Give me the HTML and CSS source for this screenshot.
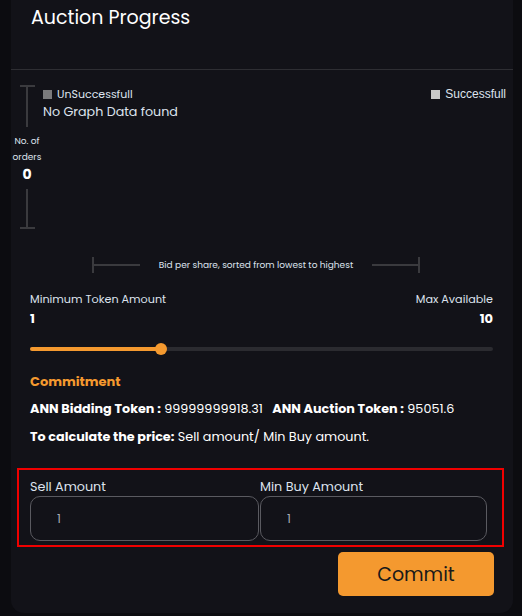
FILE: index.html
```html
<!DOCTYPE html>
<html>
<head>
<meta charset="utf-8">
<link rel="stylesheet" href="styles.css">
</head>
<body>
<div class="card">
  <header class="head">
    <h2 class="title">Auction Progress</h2>
  </header>
  <section class="chart">
    <div class="yaxis">
      <span class="cap"></span>
      <span class="vline"></span>
      <span class="ylabel">No. of<br>orders</span>
      <span class="ycount">0</span>
      <span class="vline v2"></span>
      <span class="cap"></span>
    </div>
    <div class="plot">
      <div class="legend">
        <div class="leg"><span class="sq dark"></span><span>UnSuccessfull</span></div>
        <div class="leg right"><span class="sq light"></span><span>Successfull</span></div>
      </div>
      <p class="nodata">No Graph Data found</p>
    </div>
  </section>
  <div class="xaxis">
    <span class="hcap"></span>
    <span class="hline"></span>
    <span class="xlabel">Bid per share, sorted from lowest to highest</span>
    <span class="hline"></span>
    <span class="hcap"></span>
  </div>
  <section class="range">
    <div class="range-row">
      <span>Minimum Token Amount</span>
      <span>Max Available</span>
    </div>
    <div class="range-row vals">
      <span>1</span>
      <span>10</span>
    </div>
    <div class="slider">
      <div class="fill" style="width: 28.3%"></div>
      <div class="thumb"></div>
    </div>
  </section>
  <section class="commit">
    <h3 class="ctitle">Commitment</h3>
    <p class="line"><b>ANN Bidding Token :</b> 99999999918.31 <b class="sep">ANN Auction Token :</b> 95051.6</p>
    <p class="line"><b>To calculate the price:</b> Sell amount/ Min Buy amount.</p>
  </section>
  <div class="boxed">
    <div class="field f1">
      <label>Sell Amount</label>
      <div class="input">1</div>
    </div>
    <div class="field f2">
      <label>Min Buy Amount</label>
      <div class="input">1</div>
    </div>
  </div>
  <div class="actions">
    <button class="btn">Commit</button>
  </div>
</div>
</body>
</html>
```
FILE: styles.css
```css
* { box-sizing: border-box; }
html, body { margin: 0; padding: 0; }
body {
  background: #0c0c10;
  font-family: "Poppins", "Open Sans", "Noto Sans", sans-serif;
  color: #ffffff;
  width: 522px;
  height: 616px;
  overflow: hidden;
}
.card {
  margin-left: 11px;
  width: 502px;
  height: 613px;
  background: #121218;
  border-radius: 0 0 13px 13px;
}
.head {
  height: 70px;
  border-bottom: 1px solid #2e2e33;
  padding: 4px 0 0 20px;
}
.title {
  margin: 0;
  font-size: 19px;
  font-weight: 400;
  line-height: 28px;
}
.chart {
  display: flex;
  height: 174px;
}
.yaxis {
  width: 32px;
  display: flex;
  flex-direction: column;
  align-items: center;
  padding-top: 15px;
}
.cap {
  display: block;
  width: 15px;
  height: 2px;
  background: #3a3a3e;
}
.vline {
  display: block;
  width: 2px;
  height: 40px;
  background: #3a3a3e;
}
.vline.v2 { height: 38px; }
.ylabel {
  font-size: 9px;
  line-height: 16px;
  color: #dde3ee;
  text-align: center;
  margin-top: 6px;
}
.ycount {
  font-size: 14px;
  font-weight: 700;
  line-height: 18px;
  margin-bottom: 6px;
}
.plot {
  flex: 1;
  padding: 17px 7px 0 0;
}
.legend {
  display: flex;
  justify-content: space-between;
}
.leg {
  display: flex;
  align-items: center;
  gap: 5px;
  font-size: 11px;
  line-height: 14px;
  color: #dde3ee;
}
.leg.right { font-family: "Liberation Sans", Arial, sans-serif; font-size: 12px; }
.sq {
  display: block;
  width: 9px;
  height: 9px;
}
.sq.dark { background: #7a7a7c; }
.sq.light { background: #c8c8c8; }
.nodata {
  margin: 2px 0 0;
  font-size: 12.7px;
  line-height: 18px;
  color: #dde3ee;
}
.xaxis {
  display: flex;
  align-items: center;
  margin: 13px 0 0 81px;
  width: 328px;
  height: 16px;
}
.hcap {
  display: block;
  width: 2px;
  height: 16px;
  background: #3a3a3e;
}
.hline {
  display: block;
  width: 46px;
  height: 2px;
  background: #3a3a3e;
}
.xlabel {
  flex: 1;
  text-align: center;
  font-size: 9px;
  color: #dde3ee;
  white-space: nowrap;
}
.range {
  padding: 18px 20px 0 19px;
}
.range-row {
  display: flex;
  justify-content: space-between;
  font-size: 11.2px;
  line-height: 16px;
  color: #dde3ee;
}
.range-row.vals {
  margin-top: 2px;
  font-size: 13px;
  font-weight: 700;
  color: #ffffff;
  line-height: 20px;
}
.slider {
  position: relative;
  margin-top: 18px;
  height: 4px;
  border-radius: 2px;
  background: #2b2b30;
}
.fill {
  height: 4px;
  border-radius: 2px;
  background: #f4992f;
}
.thumb {
  position: absolute;
  left: calc(28.3% - 6px);
  top: -4px;
  width: 12px;
  height: 12px;
  border-radius: 50%;
  background: #f4992f;
}
.commit {
  padding: 22px 20px 0 19px;
}
.ctitle {
  margin: 0;
  font-size: 13px;
  font-weight: 700;
  line-height: 18px;
  color: #f4992f;
}
.line {
  margin: 8px 0 0;
  font-size: 12.75px;
  line-height: 20px;
  color: #ffffff;
}
.line b { font-weight: 700; }
.line .sep { margin-left: 6px; }
.boxed {
  margin: 21px 9px 0 6px;
  border: 2px solid #f00000;
  display: grid;
  grid-template-columns: 229px 227px;
  column-gap: 1px;
  padding: 8px 15px 4px 11px;
}
.field label {
  display: block;
  font-size: 12.75px;
  line-height: 17px;
  color: #dde3ee;
}
.input {
  margin-top: 1px;
  height: 45px;
  border: 1px solid #5a5a60;
  border-radius: 10px;
  padding-left: 26px;
  font-size: 12px;
  line-height: 43px;
  color: #a8acb6;
}
.actions {
  display: flex;
  justify-content: flex-end;
  padding: 5px 19px 0 0;
}
.btn {
  width: 156px;
  height: 44px;
  border: none;
  border-radius: 5px;
  background: #f4992f;
  color: #1a1a1a;
  font-family: inherit;
  font-size: 19px;
}
```
